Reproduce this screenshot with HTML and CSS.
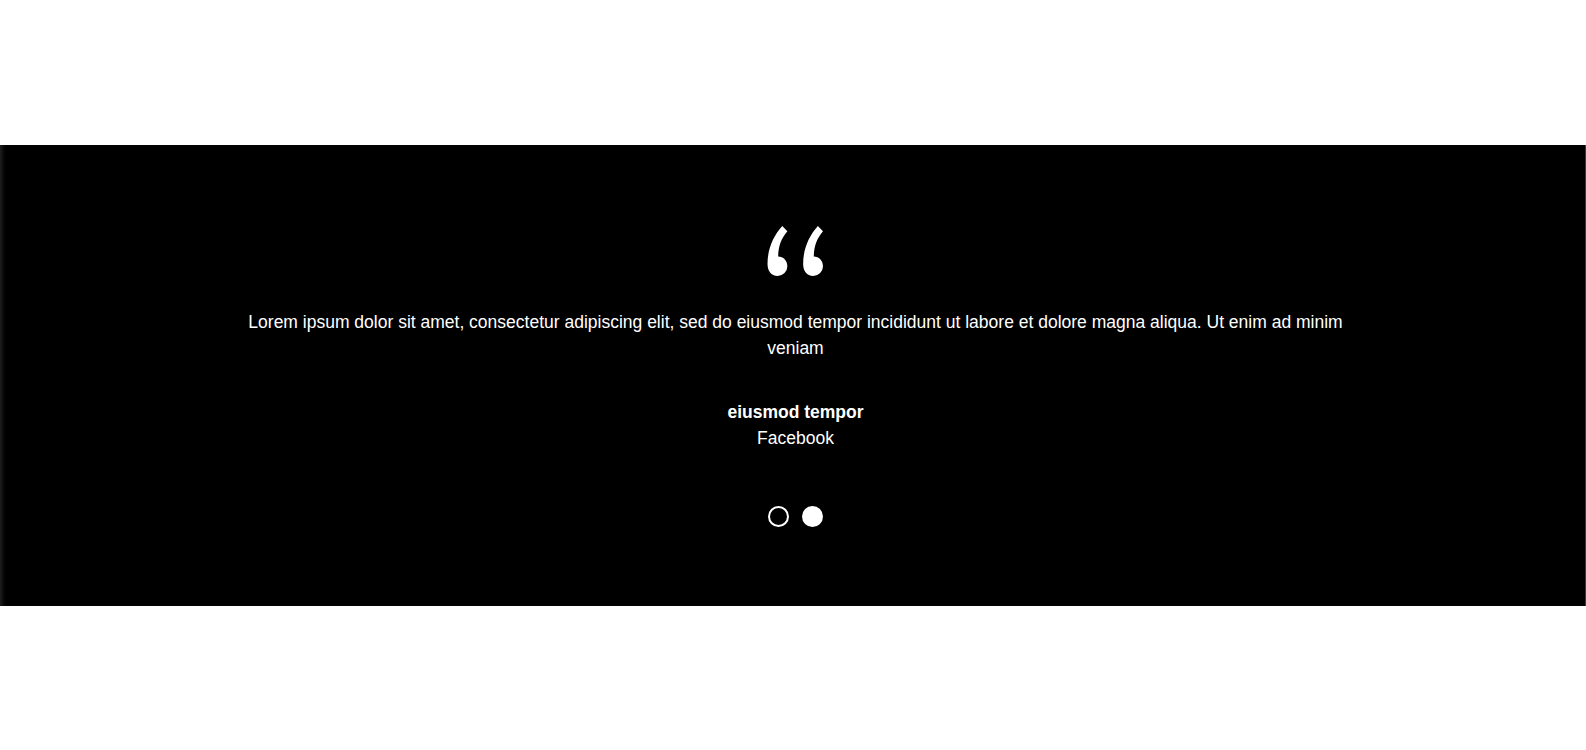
FILE: index.html
```html
<!DOCTYPE html>
<html lang="en">
<head>
<meta charset="utf-8">
<title>Testimonial</title>
<link rel="stylesheet" href="styles.css">
</head>
<body>
<section class="testimonial">
  <svg class="quote-mark" viewBox="0 0 56 49" width="57" height="50" aria-hidden="true">
    <path d="M15,0 L20,5 C14,12 11,20 11,30 C16,30 20,34 20,39.5 A9.5,9.5 0 0 1 10.5,49 C4,49 0.5,44 0.5,37 C0.5,23 6,10 15,0 Z" fill="#fff"/>
    <path transform="translate(35,0)" d="M15,0 L20,5 C14,12 11,20 11,30 C16,30 20,34 20,39.5 A9.5,9.5 0 0 1 10.5,49 C4,49 0.5,44 0.5,37 C0.5,23 6,10 15,0 Z" fill="#fff"/>
  </svg>
  <p class="quote-text">Lorem ipsum dolor sit amet, consectetur adipiscing elit, sed do eiusmod tempor incididunt ut labore et dolore magna aliqua. Ut enim ad minim veniam</p>
  <div class="author">
    <div class="author-name">eiusmod tempor</div>
    <div class="author-company">Facebook</div>
  </div>
  <div class="dots">
    <span class="dot"></span>
    <span class="dot dot-active"></span>
  </div>
</section>
</body>
</html>
```
FILE: styles.css
```css
html, body {
  margin: 0;
  padding: 0;
  background: #fff;
}
body {
  min-height: 100vh;
  display: flex;
  flex-direction: column;
  justify-content: center;
  font-family: "Liberation Sans", Arial, Helvetica, sans-serif;
}
.testimonial {
  background: #000;
  color: #fff;
  padding: 81px 0 79px 6px;
  display: flex;
  flex-direction: column;
  align-items: center;
  box-shadow: inset 5px 0 4px -3px rgba(255, 255, 255, 0.15);
  border-right: 1px solid #3a3a3a;
}
.quote-mark {
  display: block;
}
.quote-text {
  margin: 33px 0 0;
  max-width: 1120px;
  text-align: center;
  font-size: 17.5px;
  line-height: 26px;
}
.author {
  margin-top: 38px;
  text-align: center;
  font-size: 17.5px;
  line-height: 26px;
}
.author-name {
  font-weight: bold;
}
.author-company {
  margin-top: 0;
}
.dots {
  margin-top: 55px;
  display: flex;
  gap: 13px;
}
.dot {
  width: 21px;
  height: 21px;
  box-sizing: border-box;
  border: 2px solid #fff;
  border-radius: 50%;
}
.dot-active {
  background: #fff;
}
```
